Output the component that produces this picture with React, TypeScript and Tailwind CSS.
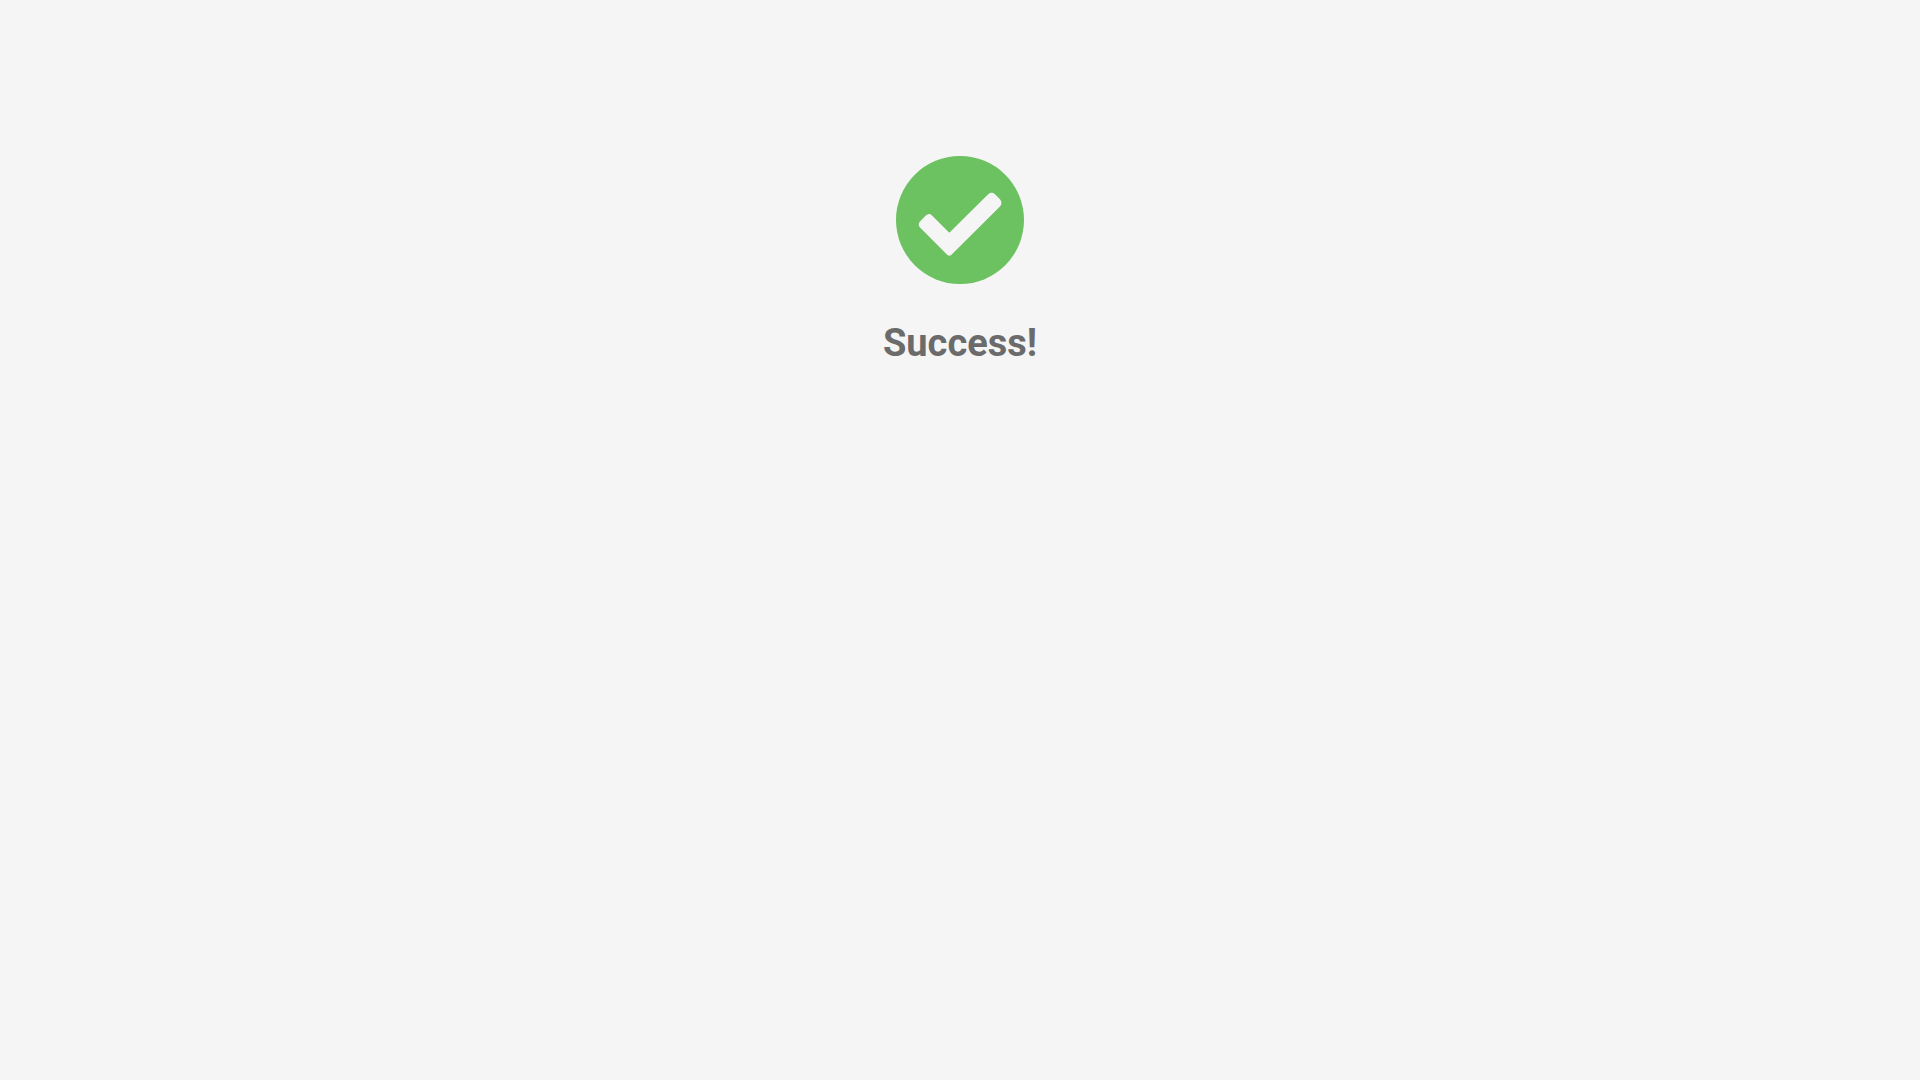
import React from "react";

function CheckCircle() {
  return (
    <svg width="128" height="128" viewBox="0 0 128 128" className="block">
      <circle cx="64" cy="64" r="64" fill="#6cc160" />
      <path
        d="M53.3 76.7 L92.4 38 Q95.7 35.4 99 38.2 L104 43.2 Q107 47 104 50.6 L55.2 99 Q53.3 100.6 51.4 99 L24 71.6 Q21.4 68.5 24 65.4 L29.8 59.6 Q33 56.6 36 59.4 Z"
        fill="#f5f5f5"
      />
    </svg>
  );
}

export default function App() {
  return (
    <div className="min-h-screen bg-[#f5f5f5] flex flex-col items-center pt-[156px] font-['Roboto',sans-serif]">
      <CheckCircle />
      <h1 className="mt-[36px] text-[38px] leading-[46px] font-bold text-[#6b6b6b]">
        Success!
      </h1>
    </div>
  );
}
